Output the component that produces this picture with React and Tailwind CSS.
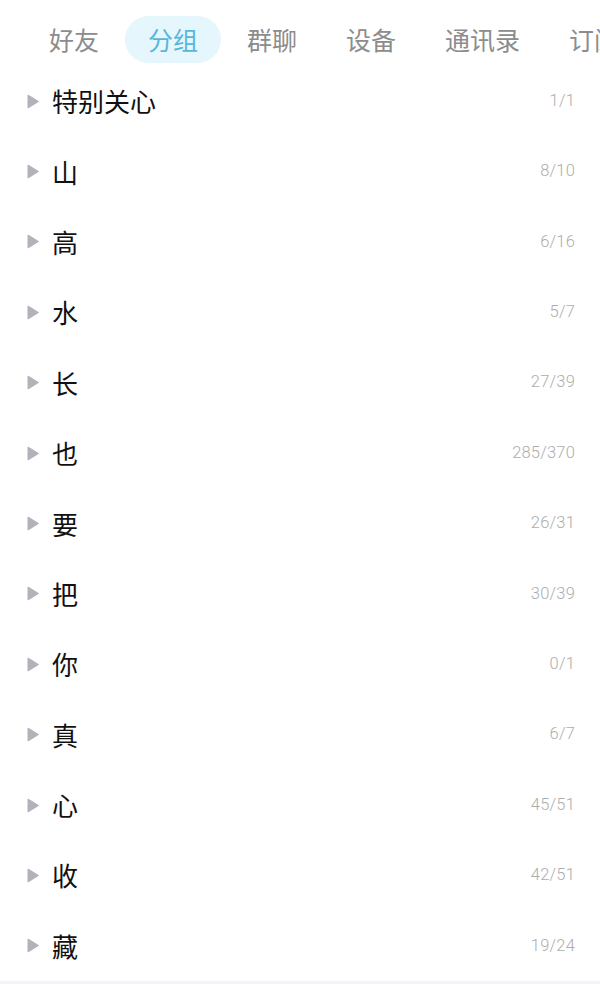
import React from "react";

const tabs = ["好友", "分组", "群聊", "设备", "通讯录", "订阅号"];

const groups = [
  { name: "特别关心", count: "1/1" },
  { name: "山", count: "8/10" },
  { name: "高", count: "6/16" },
  { name: "水", count: "5/7" },
  { name: "长", count: "27/39" },
  { name: "也", count: "285/370" },
  { name: "要", count: "26/31" },
  { name: "把", count: "30/39" },
  { name: "你", count: "0/1" },
  { name: "真", count: "6/7" },
  { name: "心", count: "45/51" },
  { name: "收", count: "42/51" },
  { name: "藏", count: "19/24" },
];

const cjk = { fontFamily: '"Noto Sans CJK SC", "Noto Sans", sans-serif' };

const Triangle = () => (
  <svg width="12" height="15" viewBox="0 0 12 15" className="shrink-0">
    <path d="M1 1 L11.5 7.5 L1 14 Z" fill="#b2b2ba" stroke="#b2b2ba" strokeWidth="1" strokeLinejoin="round" />
  </svg>
);

const App = () => {
  return (
    <div className="w-[600px] h-[984px] bg-white overflow-hidden flex flex-col" style={cjk}>
      <div className="h-[66px] shrink-0 flex items-start pt-[16px] pl-[26px] gap-[3px] whitespace-nowrap">
        {tabs.map((t, i) => (
          <div
            key={t}
            className={
              "h-[47px] px-[23px] rounded-full flex items-center text-[25px] leading-none " +
              (i === 1 ? "bg-[#e5f6fc] text-[#58b6dc]" : "text-[#8c8c8c]")
            }
          >
            {t}
          </div>
        ))}
      </div>

      <div className="flex flex-col">
        {groups.map((g) => (
          <div key={g.name} className="h-[70.4px] flex items-center pl-[27px] pr-[25px]">
            <Triangle />
            <span className="ml-[13px] text-[26px] leading-none text-[#111]">{g.name}</span>
            <span
              className="ml-auto text-[16.5px] font-light text-[#adadad] tracking-[0.2px]"
              style={{ fontFamily: 'Roboto, "Liberation Sans", sans-serif' }}
            >
              {g.count}
            </span>
          </div>
        ))}
      </div>

      <div className="mt-auto h-[4px] bg-[#f4f4f6]" />
    </div>
  );
};

export default App;
